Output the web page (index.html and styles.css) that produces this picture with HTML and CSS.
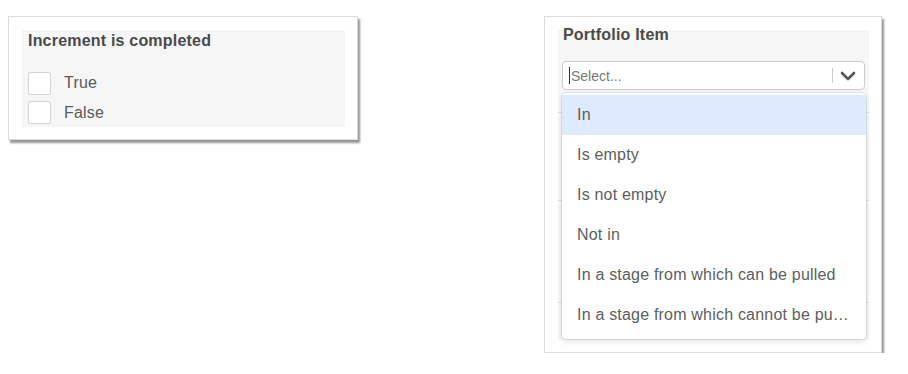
FILE: index.html
```html
<!DOCTYPE html>
<html lang="en">
<head>
    <meta charset="UTF-8">
    <title>Filters</title>
    <link rel="stylesheet" href="styles.css">
</head>
<body>
    <div class="card card-left">
        <div class="panel">
            <div class="panel-title">Increment is completed</div>
            <label class="check-row"><span class="box"></span>True</label>
            <label class="check-row"><span class="box"></span>False</label>
        </div>
    </div>

    <div class="card card-right">
        <div class="panel panel-select">
            <div class="panel-title title-top">Portfolio Item</div>
            <div class="select">
                <span class="caret"></span>
                <span class="placeholder">Select...</span>
                <span class="sep"></span>
                <svg class="chevron" width="16" height="10" viewBox="0 0 16 10">
                    <path d="M2 2 L8 8 L14 2" fill="none" stroke="#555" stroke-width="2.6" stroke-linecap="round" stroke-linejoin="round"/>
                </svg>
            </div>
            <div class="under under-a"></div>
            <div class="under under-b"></div>
            <div class="under under-c"></div>

            <div class="menu">
                <div class="option active">In</div>
                <div class="option">Is empty</div>
                <div class="option">Is not empty</div>
                <div class="option">Not in</div>
                <div class="option">In a stage from which can be pulled</div>
                <div class="option">In a stage from which cannot be pulled</div>
            </div>
        </div>
    </div>
</body>
</html>
```

FILE: styles.css
```css
body {
    margin: 0;
    padding: 16px 26px 0 8px;
    background: #ffffff;
    font-family: 'Liberation Sans', Arial, sans-serif;
    color: #555555;
    display: flex;
    justify-content: space-between;
    align-items: flex-start;
}
.card {
    background: #ffffff;
    border: 1px solid #dcdcdc;
    box-shadow: 2px 3px 2px rgba(0, 0, 0, 0.42);
    padding: 13px 12px 12px 13px;
}
.card-left {
    width: 323px;
}
.card-right {
    width: 311px;
}
.panel {
    background: #f6f6f6;
    padding: 0 6px;
}
.panel-title {
    font-size: 16px;
    font-weight: bold;
    color: #4a4a4a;
    height: 22px;
    line-height: 22px;
    margin-bottom: 16px;
    letter-spacing: 0.2px;
}
.check-row {
    display: flex;
    align-items: center;
    height: 30px;
    font-size: 16px;
    letter-spacing: 0.2px;
    color: #5a5a5a;
}
.check-row:last-child {
    height: 29px;
}
.box {
    width: 21px;
    height: 21px;
    border: 1px solid #d4d4d4;
    border-radius: 2px;
    background: #ffffff;
    margin-right: 13px;
}
.panel-select {
    display: flow-root;
    position: relative;
    height: 310px;
    padding: 0 4px;
}
.title-top {
    height: 18px;
    line-height: 18px;
    margin: -4px 0 17px 1px;
}
.select {
    height: 27px;
    border: 1px solid #cccccc;
    border-radius: 4px;
    background: #ffffff;
    display: flex;
    align-items: center;
    padding-left: 6px;
}
.caret {
    width: 1px;
    height: 17px;
    background: #333333;
    margin-right: 1px;
}
.placeholder {
    flex: 1;
    font-size: 14px;
    color: #7a7a7a;
}
.sep {
    width: 1px;
    height: 15px;
    background: #cccccc;
    margin-right: 7px;
}
.chevron {
    margin-right: 8px;
}
.under {
    border-bottom: 1px solid #dddddd;
    margin: 0 -4px;
}
.under-a { height: 22px; }
.under-b { height: 87px; }
.under-c { height: 101px; }
.menu {
    position: absolute;
    top: 63px;
    left: 4px;
    right: 3px;
    background: #ffffff;
    border-radius: 4px;
    box-shadow: 0 0 0 1px rgba(0, 0, 0, 0.08), 0 3px 6px rgba(0, 0, 0, 0.1);
    padding: 2px 0 4px;
}
.option {
    height: 40px;
    line-height: 40px;
    padding: 0 15px;
    font-size: 16px;
    letter-spacing: 0.2px;
    color: #5e5e5e;
    white-space: nowrap;
    overflow: hidden;
    text-overflow: ellipsis;
}
.option.active {
    background: #deebff;
}
```
